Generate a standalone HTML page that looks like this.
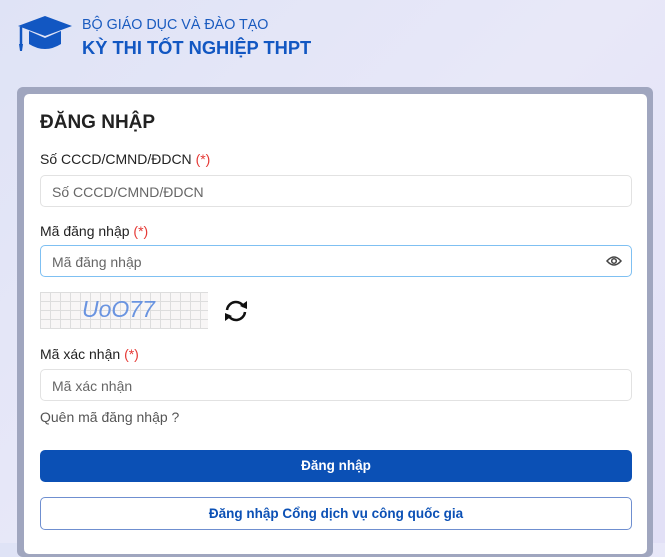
<!DOCTYPE html><html><head><meta charset="utf-8"><style>
*{margin:0;padding:0;box-sizing:border-box}
body{width:665px;height:543px;overflow:hidden;position:relative;font-family:"Liberation Sans","DejaVu Sans",sans-serif;background:linear-gradient(135deg,#dfe3f6 0%,#e8e8f8 50%,#e2e0f6 100%)}
.a{position:absolute}
.frame{left:17px;top:87px;width:636px;height:470px;background:#a0a6bf;border-radius:6px}
.card{left:24px;top:94px;width:623px;height:460px;background:#fff;border-radius:5px}
.lbl{font-size:14px;color:#222;left:40px}
.lbl b{color:#e53935;font-weight:normal}
.inp{left:40px;width:592px;height:32px;border:1px solid #e2e2e2;border-radius:5px;font-size:14px;color:#666;padding:8px 11px;background:#fff}
</style></head><body>
<svg class="a" style="left:16px;top:14px" width="58" height="40" viewBox="0 0 58 40"><path d="M2 12 L29 2 L56 12 L29 22 Z" fill="#1257c2"/><path d="M13 17 L13 30 Q29 40 45 30 L45 17 L29 24 Z" fill="#1257c2"/><path d="M5 13 L5 30" stroke="#1257c2" stroke-width="2.5"/><path d="M3 30 L7 30 L6 37 L4 37 Z" fill="#1257c2"/></svg>
<div class="a" style="left:82px;top:17px;font-size:14.3px;color:#1a5bbf">BỘ GIÁO DỤC VÀ ĐÀO TẠO</div>
<div class="a" style="left:82px;top:37px;font-size:18.3px;font-weight:bold;color:#1257c2">KỲ THI TỐT NGHIỆP THPT</div>
<div class="a frame"></div><div class="a card"></div>
<div class="a" style="left:40px;top:112px;font-size:19px;color:#222;font-weight:bold">ĐĂNG NHẬP</div>
<div class="a lbl" style="top:151px">Số CCCD/CMND/ĐDCN <b>(*)</b></div>
<div class="a inp" style="top:175px">Số CCCD/CMND/ĐDCN</div>
<div class="a lbl" style="top:223px">Mã đăng nhập <b>(*)</b></div>
<div class="a inp" style="top:245px;border-color:#7fc0f2">Mã đăng nhập</div>
<svg class="a" style="left:606px;top:254px" width="16" height="14" viewBox="0 0 16 14"><path d="M1 7 Q8 -1 15 7 Q8 15 1 7Z" fill="none" stroke="#444" stroke-width="1.5"/><circle cx="8" cy="7" r="2.3" fill="none" stroke="#444" stroke-width="1.5"/></svg>
<div class="a" style="left:40px;top:292px;width:168px;height:37px;background-color:#f8f6f6;background-image:linear-gradient(#ddd 1px,transparent 1px),linear-gradient(90deg,#ddd 1px,transparent 1px);background-size:10px 9px"></div>
<div class="a" style="left:82px;top:296px;font-size:23px;font-style:italic;color:#6a94e0">UoO77</div>
<svg class="a" style="left:221px;top:298px" width="30" height="26" viewBox="0 0 30 26"><path d="M6 12 A9 9 0 0 1 23 9" fill="none" stroke="#111" stroke-width="2.5"/><path d="M19 8 L26 11 L26 3Z" fill="#111"/><path d="M24 14 A9 9 0 0 1 7 17" fill="none" stroke="#111" stroke-width="2.5"/><path d="M11 18 L4 15 L4 23Z" fill="#111"/></svg>
<div class="a lbl" style="top:346px">Mã xác nhận <b>(*)</b></div>
<div class="a inp" style="top:369px">Mã xác nhận</div>
<div class="a" style="left:40px;top:409px;font-size:14px;color:#555">Quên mã đăng nhập ?</div>
<div class="a" style="left:40px;top:450px;width:592px;height:32px;background:#0b50b5;border-radius:5px;color:#fff;font-size:13.5px;font-weight:bold;text-align:center;line-height:32px">Đăng nhập</div>
<div class="a" style="left:40px;top:497px;width:592px;height:33px;border:1px solid #6f8fd0;border-radius:5px;color:#0b50b5;font-size:13.5px;font-weight:bold;text-align:center;line-height:31px">Đăng nhập Cổng dịch vụ công quốc gia</div>
</body></html>
